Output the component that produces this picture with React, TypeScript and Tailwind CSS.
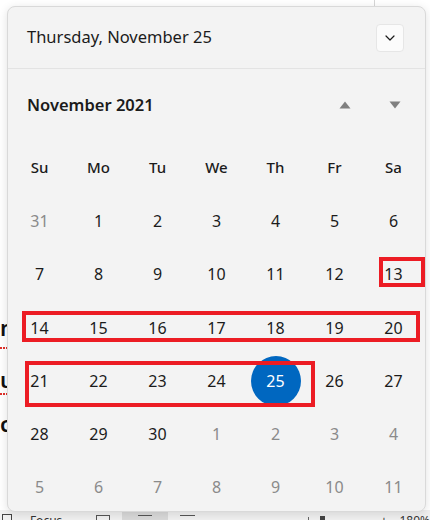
import React from "react";

type Day = { n: number; muted?: boolean; selected?: boolean };

const weekdays = ["Su", "Mo", "Tu", "We", "Th", "Fr", "Sa"];

// six weeks shown for November 2021, padded with Oct / Dec days
const buildDays = (): Day[] => {
  const days: Day[] = [{ n: 31, muted: true }];
  for (let d = 1; d <= 30; d++) days.push({ n: d, selected: d === 25 });
  for (let d = 1; d <= 11; d++) days.push({ n: d, muted: true });
  return days;
};

const ChevronDown = () => (
  <svg width="10" height="6" viewBox="0 0 10 6" fill="none">
    <path d="M1 1l4 4 4-4" stroke="#1b1b1b" strokeWidth="1.2" strokeLinecap="round" strokeLinejoin="round" />
  </svg>
);

const Triangle = ({ up }: { up?: boolean }) => (
  <svg width="12" height="8" viewBox="0 0 12 8">
    <path d={up ? "M6 0.5L11.5 7.5H0.5z" : "M0.5 0.5H11.5L6 7.5z"} fill="#7f7f7f" />
  </svg>
);

const Mark = ({ className }: { className: string }) => (
  <div className={`pointer-events-none absolute border-[4px] border-[#ec1c24] ${className}`} />
);

export default function App() {
  const days = buildDays();

  return (
    <div
      className="relative h-[520px] w-[430px] overflow-hidden bg-white"
      style={{ fontFamily: '"Noto Sans", "Open Sans", sans-serif' }}
    >
      {/* document behind the flyout */}
      <div className="absolute left-[374px] top-0 h-[8px] w-px bg-[#d6d6d6]" />
      <div className="absolute left-0 top-[316px] text-[22px] font-semibold leading-none text-[#111]">m</div>
      <div className="absolute left-0 top-[346px] h-[3px] w-[8px] border-b-2 border-dotted border-[#e0302a]" />
      <div className="absolute left-0 top-[368px] text-[22px] font-semibold leading-none text-[#111]">u</div>
      <div className="absolute left-0 top-[392px] h-[3px] w-[8px] border-b-2 border-dotted border-[#e0302a]" />
      <div className="absolute left-0 top-[412px] text-[22px] font-semibold leading-none text-[#111]">c</div>

      {/* status bar */}
      <div className="absolute bottom-[-12px] left-0 flex h-[22px] w-full items-center gap-3 bg-[#f0f0f0] text-[12px] leading-none text-[#333]">
        <div className="ml-[2px] h-[14px] w-[10px] border border-[#444]" />
        <span className="ml-[6px]">Focus</span>
        <div className="ml-[22px] h-[12px] w-[14px] border-x border-t border-[#555]" />
        <div className="flex h-full w-[46px] items-center justify-center bg-[#d9d9d9]">
          <div className="h-[12px] w-[14px] border-t border-[#555]" />
        </div>
        <div className="h-[12px] w-[16px] border-t border-[#555]" />
        <span className="ml-[10px]">−</span>
        <div className="relative h-px w-[134px] bg-[#666]">
          <div className="absolute left-[72px] top-[-4px] h-[9px] w-px bg-[#666]" />
          <div className="absolute left-[84px] top-[-5px] h-[11px] w-[5px] bg-[#444]" />
        </div>
        <span>+</span>
        <span>180%</span>
      </div>

      {/* date picker flyout */}
      <div className="absolute left-[7px] top-[6px] flex h-[506px] w-[419px] flex-col overflow-hidden rounded-[8px] border border-[#d9d9d9] bg-[#f3f3f3] shadow-[0_2px_10px_rgba(0,0,0,0.12)]">
        <div className="flex h-[62px] shrink-0 items-center justify-between border-b border-[#e3e3e3] pl-[19px] pr-[21px]">
          <span className="text-[16.5px] text-[#1b1b1b]">Thursday, November 25</span>
          <button className="flex h-[28px] w-[28px] items-center justify-center rounded-[4px] border border-[#e6e6e6] bg-[#fbfbfb]">
            <ChevronDown />
          </button>
        </div>

        <div className="flex h-[72px] shrink-0 items-center pl-[19px]">
          <span className="text-[16.5px] font-semibold text-[#1b1b1b]">November 2021</span>
          <div className="ml-auto flex items-center">
            <div className="flex w-[50px] justify-center">
              <Triangle up />
            </div>
            <div className="mr-[5px] flex w-[50px] justify-center">
              <Triangle />
            </div>
          </div>
        </div>

        <div className="ml-[2px] grid grid-cols-[repeat(7,59px)] auto-rows-[53.3px]">
          {weekdays.map((w) => (
            <div key={w} className="flex items-center justify-center text-[15px] font-medium text-[#1b1b1b]">
              {w}
            </div>
          ))}
          {days.map((d, i) => (
            <div key={i} className="flex items-center justify-center">
              {d.selected ? (
                <div className="flex h-[50px] w-[50px] items-center justify-center rounded-full bg-[#0067c0] text-[16px] text-white">
                  {d.n}
                </div>
              ) : (
                <span className={`text-[16px] ${d.muted ? "text-[#8a8a8a]" : "text-[#1b1b1b]"}`}>{d.n}</span>
              )}
            </div>
          ))}
        </div>
      </div>

      {/* red highlight boxes */}
      <Mark className="left-[379px] top-[257px] h-[30px] w-[46px]" />
      <Mark className="left-[22px] top-[311px] h-[31px] w-[398px]" />
      <Mark className="left-[25px] top-[361px] h-[46px] w-[290px]" />
    </div>
  );
}
